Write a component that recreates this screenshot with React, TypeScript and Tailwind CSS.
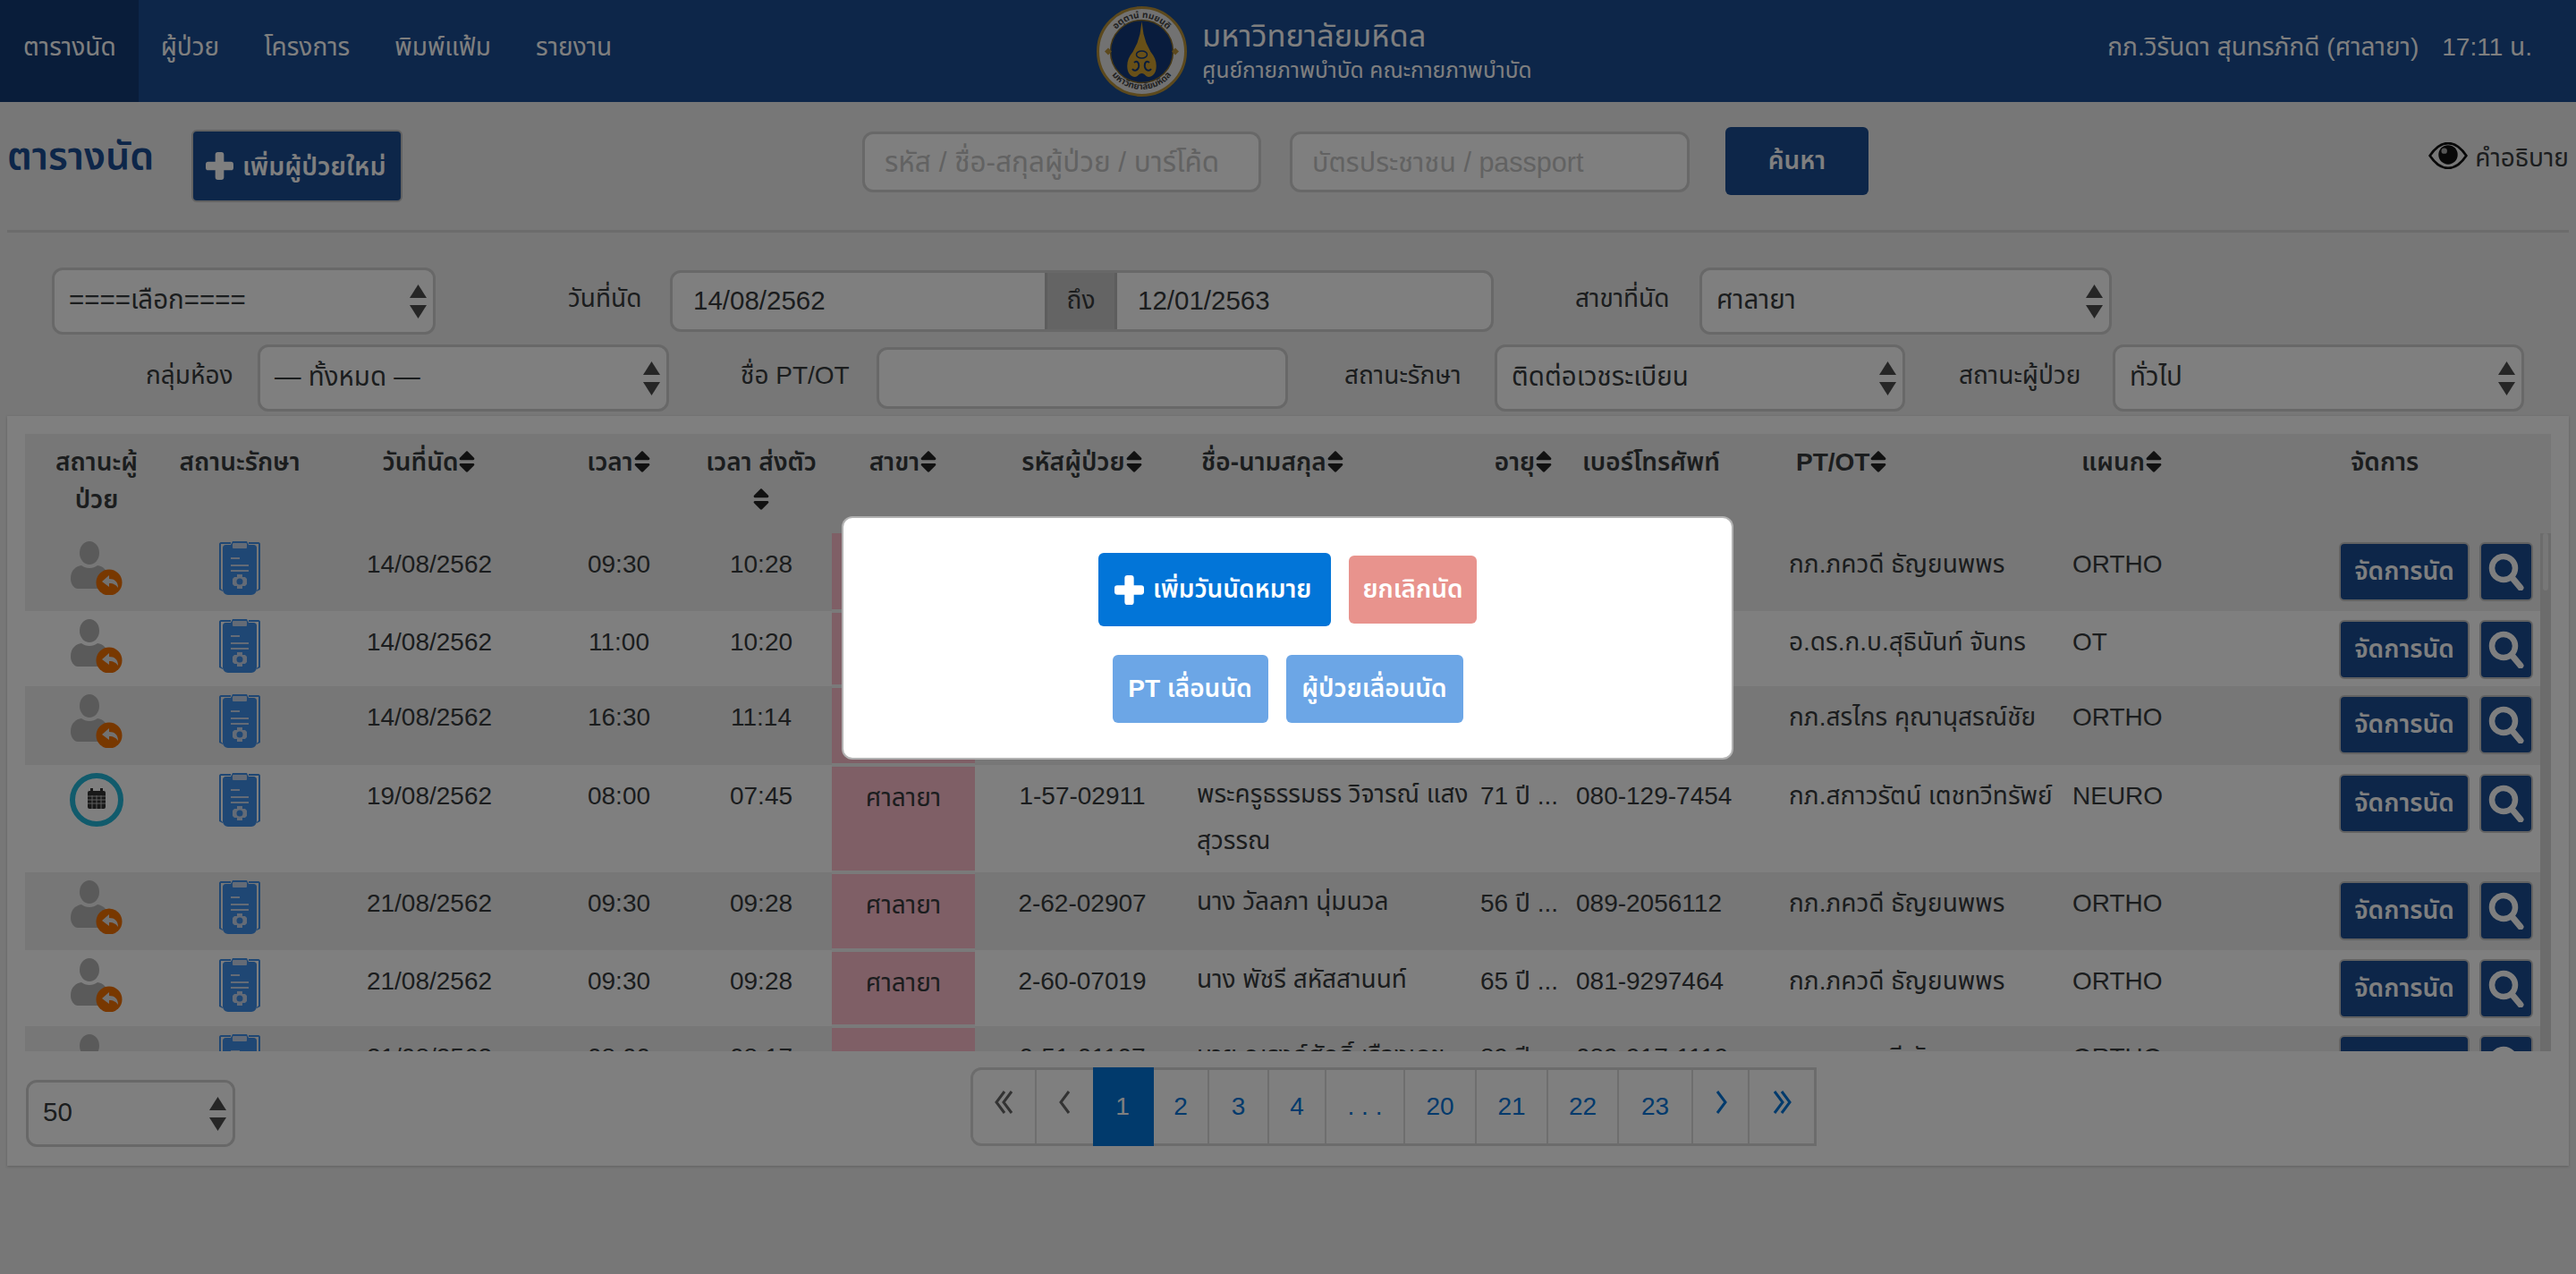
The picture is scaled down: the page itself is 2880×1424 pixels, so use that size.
import React from 'react';
import { FaSort } from 'react-icons/fa';

const NAVY_BTN = 'bg-[#1a4c92] border-2 border-[#c4c4c4] rounded-md text-white';

const navItems = ['ตารางนัด', 'ผู้ป่วย', 'โครงการ', 'พิมพ์แฟ้ม', 'รายงาน'];

const rows = [
  { h: 'h-[87px]', icon: 'person', date: '14/08/2562', time: '09:30', sent: '10:28', code: '', name: '', age: '', phone: '', pt: 'กภ.ภควดี ธัญยนพพร', dept: 'ORTHO' },
  { h: 'h-[84px]', icon: 'person', date: '14/08/2562', time: '11:00', sent: '10:20', code: '', name: '', age: '', phone: '', pt: 'อ.ดร.ก.บ.สุธินันท์ จันทร', dept: 'OT' },
  { h: 'h-[88px]', icon: 'person', date: '14/08/2562', time: '16:30', sent: '11:14', code: '', name: '', age: '', phone: '', pt: 'กภ.สรไกร คุณานุสรณ์ชัย', dept: 'ORTHO' },
  { h: 'h-[120px]', icon: 'calendar', date: '19/08/2562', time: '08:00', sent: '07:45', code: '1-57-02911', name: 'พระครูธรรมธร วิจารณ์ แสงสุวรรณ', age: '71 ปี ...', phone: '080-129-7454', pt: 'กภ.สกาวรัตน์ เตชทวีทรัพย์', dept: 'NEURO' },
  { h: 'h-[87px]', icon: 'person', date: '21/08/2562', time: '09:30', sent: '09:28', code: '2-62-02907', name: 'นาง วัลลภา นุ่มนวล', age: '56 ปี ...', phone: '089-2056112', pt: 'กภ.ภควดี ธัญยนพพร', dept: 'ORTHO' },
  { h: 'h-[85px]', icon: 'person', date: '21/08/2562', time: '09:30', sent: '09:28', code: '2-60-07019', name: 'นาง พัชรี สหัสสานนท์', age: '65 ปี ...', phone: '081-9297464', pt: 'กภ.ภควดี ธัญยนพพร', dept: 'ORTHO' },
  { h: 'h-[87px]', icon: 'person', date: '21/08/2562', time: '08:00', sent: '08:17', code: '0-51-01107', name: 'นาย ณรงค์ศักดิ์ เรืองเดช', age: '89 ปี ...', phone: '089-917-1119', pt: 'อ.ดร.ภควดี ธัญยนพพร', dept: 'ORTHO' },
];

const pages = [
  { label: '1', w: 'w-[68px]', active: true },
  { label: '2', w: 'w-[62px]' },
  { label: '3', w: 'w-[67px]' },
  { label: '4', w: 'w-[64px]' },
  { label: '. . .', w: 'w-[88px]' },
  { label: '20', w: 'w-[80px]' },
  { label: '21', w: 'w-[80px]' },
  { label: '22', w: 'w-[79px]' },
  { label: '23', w: 'w-[83px]' },
];

function SelectArrows() {
  return (
    <svg width="19" height="38" viewBox="0 0 19 38" className="shrink-0">
      <polygon points="9.5,0 19,15 0,15" fill="#4c4c4c" />
      <polygon points="0,23 19,23 9.5,38" fill="#4c4c4c" />
    </svg>
  );
}

function FakeSelect({ value, className }: { value: string; className: string }) {
  return (
    <div className={`h-[75px] bg-white border-[3px] border-[#d0d0d0] rounded-xl flex items-center justify-between pl-[16px] pr-[7px] text-[29.5px] ${className}`}>
      <span className="pb-[4px]">{value}</span>
      <SelectArrows />
    </div>
  );
}

function Plus({ size }: { size: number }) {
  return (
    <svg width={size} height={size} viewBox="0 0 32 32" className="shrink-0">
      <rect x="11" y="0" width="10" height="32" rx="3" fill="currentColor" />
      <rect x="0" y="11" width="32" height="10" rx="3" fill="currentColor" />
    </svg>
  );
}

function PersonIcon() {
  return (
    <svg width="58" height="60" viewBox="0 0 58 60">
      <ellipse cx="21" cy="13" rx="11" ry="13" fill="#b4b4b4" />
      <path d="M0 42c0-10 6-14 12-15 5 4 13 4 18 0 6 1 12 5 12 15 0 6-4 11-8 11H8c-4 0-8-5-8-11z" fill="#b4b4b4" />
      <circle cx="43" cy="46" r="14.5" fill="#f07000" />
      <path d="M35 45l8-7v4c6 0 10 3 10 10-2-3-5-5-10-5v4z" fill="#e4e4e4" />
    </svg>
  );
}

function CalendarIcon() {
  return (
    <svg width="60" height="60" viewBox="0 0 60 60">
      <circle cx="30" cy="30" r="27" fill="white" stroke="#22b6d8" strokeWidth="6" />
      <rect x="20" y="20" width="20" height="20" rx="2" fill="#333" />
      <rect x="23" y="17" width="3" height="5" fill="#333" />
      <rect x="34" y="17" width="3" height="5" fill="#333" />
      <path d="M20 26h20M20 30h20M20 34h20M25 25v15M30 25v15M35 25v15" stroke="#bbb" strokeWidth="1" />
    </svg>
  );
}

function ClipboardIcon() {
  return (
    <svg width="48" height="60" viewBox="0 0 48 60">
      {/* back sheet brackets */}
      <path d="M1 3c0-1 1-2 2-2h11v2H3v50l2 2v1l-4-2zM47 3c0-1-1-2-2-2H34v2h11v50l-2 2v1l4-2z" fill="#3f8fe8" />
      {/* board */}
      <path d="M5 7c0-2 2-3 3-3h6l2-4h16l2 4h6c1 0 3 1 3 3v47c0 3-3 6-6 6H11c-3 0-6-3-6-6z" fill="#3f8fe8" />
      <rect x="16" y="2" width="16" height="6" rx="1" fill="#c8d6ec" />
      <rect x="14" y="18" width="10" height="2" fill="#c8d6ec" />
      <rect x="14" y="26" width="20" height="2" fill="#c8d6ec" />
      <rect x="14" y="32" width="20" height="2" fill="#c8d6ec" />
      <path d="M21 37h6v3h3l2 2v6l-2 2h-3v3h-6v-3h-3l-2-2v-6l2-2h3z" fill="#c8d6ec" />
      <circle cx="24" cy="45" r="3.5" fill="#3f8fe8" />
    </svg>
  );
}

function SearchIcon() {
  return (
    <svg width="40" height="42" viewBox="0 0 40 42">
      <circle cx="17" cy="17" r="13" fill="none" stroke="currentColor" strokeWidth="6.5" />
      <path d="M26 27l10 12" stroke="currentColor" strokeWidth="7" strokeLinecap="round" />
    </svg>
  );
}

function Seal() {
  return (
    <svg width="101" height="101" viewBox="0 0 101 101" className="shrink-0">
      <defs>
        <path id="ring-top" d="M13 50.5a37.5 37.5 0 0 1 75 0" />
        <path id="ring-bottom" d="M8 50.5a42.5 42.5 0 0 0 85 0" />
      </defs>
      <circle cx="50.5" cy="50.5" r="49" fill="#e4e4e4" stroke="#b8923a" strokeWidth="3" />
      <circle cx="50.5" cy="50.5" r="35" fill="#12397a" stroke="#8a6f2c" strokeWidth="1.5" />
      <text fontSize="10" fill="#444" fontWeight="700">
        <textPath href="#ring-top" startOffset="50%" textAnchor="middle">อตฺตานํ ทมยนฺติ</textPath>
      </text>
      <text fontSize="10" fill="#444" fontWeight="700">
        <textPath href="#ring-bottom" startOffset="50%" textAnchor="middle">มหาวิทยาลัยมหิดล</textPath>
      </text>
      <polygon points="9,50.5 13,46.5 17,50.5 13,54.5" fill="#b8923a" />
      <polygon points="84,50.5 88,46.5 92,50.5 88,54.5" fill="#b8923a" />
      {/* spire and crown */}
      <path d="M50.5 17l2 14 3 10 5 10c5 6 7 12 6 19-1 7-7 11-11 8-2-2-3-3-5-3s-3 1-5 3c-4 3-10-1-11-8-1-7 1-13 6-19l5-10 3-10z" fill="#d0a030" />
      <path d="M42 63c3-3 6 0 5 5-1 4-5 5-7 2M59 63c-3-3-6 0-5 5 1 4 5 5 7 2" fill="none" stroke="#12397a" strokeWidth="2" />
      <ellipse cx="50.5" cy="54" rx="6" ry="4" fill="none" stroke="#12397a" strokeWidth="1.5" />
    </svg>
  );
}

function Chevrons({ double, dir, className }: { double?: boolean; dir: 'left' | 'right'; className: string }) {
  const flip = dir === 'right' ? 'scale(-1 1) translate(-24 0)' : undefined;
  return (
    <svg width="24" height="26" viewBox="0 0 24 26" className={className}>
      <g transform={flip} fill="none" stroke="currentColor" strokeWidth="3">
        <path d={double ? 'M12 1L3 13l9 12' : 'M16 1L7 13l9 12'} />
        {double && <path d="M20 1l-9 12 9 12" />}
      </g>
    </svg>
  );
}

function Sort() {
  return <FaSort className="inline-block w-[20px] h-[30px] align-[-5px] text-[#222]" />;
}

export default function App() {
  return (
    <div className="relative w-[2880px] h-[1424px] overflow-hidden bg-[#eeeeee] text-[28px] leading-[42px] text-[#373a3c] font-['Liberation_Sans','Noto_Sans_Thai','Loma','Garuda','DejaVu_Sans',sans-serif]">
      {/* Nav bar */}
      <header className="h-[114px] bg-[#1a4c92] flex text-white">
        <nav className="flex w-[1226px] shrink-0 pl-[1px]">
          {navItems.map((item, i) => (
            <a key={item} className={`px-[25px] pt-[32px] ${i === 0 ? 'bg-[#123a74] -ml-[1px] pl-[26px]' : ''}`}>{item}</a>
          ))}
        </nav>
        <div className="flex items-center h-[114px]">
          <Seal />
          <div className="ml-[17px] flex flex-col -mt-[3px]">
            <span className="text-[34.5px] leading-[46px]">มหาวิทยาลัยมหิดล</span>
            <span className="text-[24.5px] leading-[32px]">ศูนย์กายภาพบำบัด คณะกายภาพบำบัด</span>
          </div>
        </div>
        <div className="ml-auto pr-[49px] pt-[32px] flex gap-[26px]">
          <span>กภ.วิรันดา สุนทรภักดี (ศาลายา)</span>
          <span>17:11 น.</span>
        </div>
      </header>

      {/* Title and search */}
      <div className="h-[146px] mx-[8px] border-b-[3px] border-[#d8d8d8] flex">
        <h1 className="text-[43px] leading-[52px] font-semibold text-[#1a4c92] mt-[34px] w-[206px]">ตารางนัด</h1>
        <button className={`${NAVY_BTN} mt-[31px] w-[236px] h-[81px] flex items-center gap-[10px] pl-[14px] font-semibold text-[28.5px]`}>
          <Plus size={31} />
          <span className="whitespace-nowrap">เพิ่มผู้ป่วยใหม่</span>
        </button>
        <input className="ml-[514px] mt-[33px] w-[446px] h-[68px] bg-white border-[3px] border-[#d0d0d0] rounded-xl px-[22px] text-[31.5px] placeholder:text-[#c4c4c4]" placeholder="รหัส / ชื่อ-สกุลผู้ป่วย / บาร์โค้ด" />
        <input className="ml-[32px] mt-[33px] w-[447px] h-[68px] bg-white border-[3px] border-[#d0d0d0] rounded-xl px-[22px] text-[30.5px] placeholder:text-[#c4c4c4]" placeholder="บัตรประชาชน / passport" />
        <button className="ml-[40px] mt-[28px] w-[160px] h-[76px] bg-[#1a4c92] rounded-md text-white font-semibold">ค้นหา</button>
        <div className="ml-auto mt-[42px] flex items-start gap-[8px] text-[28px]">
          <svg width="44" height="30" viewBox="0 0 40 28" className="mt-[3px]">
            <path d="M1 14C7 5 13 1 20 1s13 4 19 13c-6 9-12 13-19 13S7 23 1 14z" fill="none" stroke="#111" strokeWidth="2.5" />
            <circle cx="20" cy="13" r="10" fill="#111" />
            <circle cx="16" cy="9" r="3" fill="#aaa" />
          </svg>
          <span>คำอธิบาย</span>
        </div>
      </div>

      {/* Filters */}
      <div className="pt-[39px] h-[205px] flex flex-col gap-[11px]">
        <div className="flex items-center">
          <FakeSelect value="====เลือก====" className="ml-[58px] w-[429px]" />
          <label className="ml-[148px] w-[83px] pb-[6px]">วันที่นัด</label>
          <div className="ml-[31px] w-[921px] h-[69px] flex bg-white border-[3px] border-[#d0d0d0] rounded-xl text-[29.5px]">
            <span className="w-[416px] pl-[23px] flex items-center pb-[2px]">14/08/2562</span>
            <span className="w-[81px] bg-[#c8c8c8] border-x-[3px] border-[#bbb] flex items-center justify-center pb-[2px] text-[28px]">ถึง</span>
            <span className="pl-[23px] flex items-center pb-[2px]">12/01/2563</span>
          </div>
          <label className="ml-[91px] w-[109px] pb-[6px] whitespace-nowrap">สาขาที่นัด</label>
          <FakeSelect value="ศาลายา" className="ml-[30px] w-[461px]" />
        </div>
        <div className="flex items-center">
          <label className="ml-[163px] w-[95px] whitespace-nowrap pb-[6px]">กลุ่มห้อง</label>
          <FakeSelect value="— ทั้งหมด —" className="ml-[30px] w-[460px]" />
          <label className="ml-[80px] w-[122px] whitespace-nowrap pb-[6px]">ชื่อ PT/OT</label>
          <div className="ml-[30px] w-[460px] h-[69px] bg-white border-[3px] border-[#d0d0d0] rounded-xl" />
          <label className="ml-[63px] w-[137px] whitespace-nowrap pb-[6px]">สถานะรักษา</label>
          <FakeSelect value="ติดต่อเวชระเบียน" className="ml-[31px] w-[459px]" />
          <label className="ml-[60px] w-[140px] whitespace-nowrap pb-[6px]">สถานะผู้ป่วย</label>
          <FakeSelect value="ทั่วไป" className="ml-[32px] w-[460px]" />
        </div>
      </div>

      {/* Table panel */}
      <div className="mx-[8px] h-[838px] bg-white shadow-[0_1px_3px_rgba(0,0,0,0.2)] pt-[20px]">
        <div className="mx-[20px]">
          <table className="table-fixed w-[2824px] font-semibold bg-[#eeeeee]">
            <colgroup>
              <col className="w-[160px]" /><col className="w-[160px]" /><col className="w-[264px]" /><col className="w-[160px]" /><col className="w-[158px]" /><col className="w-[160px]" /><col className="w-[240px]" /><col className="w-[317px]" /><col className="w-[107px]" /><col className="w-[238px]" /><col className="w-[317px]" /><col className="w-[300px]" /><col className="w-[243px]" />
            </colgroup>
            <thead>
              <tr className="h-[111px] align-top">
                <th className="font-semibold pt-[11px]">สถานะผู้<br />ป่วย</th>
                <th className="font-semibold pt-[11px] whitespace-nowrap">สถานะรักษา</th>
                <th className="font-semibold pt-[11px]">วันที่นัด<Sort /></th>
                <th className="font-semibold pt-[11px]">เวลา<Sort /></th>
                <th className="font-semibold pt-[11px]">เวลา ส่งตัว<br /><Sort /></th>
                <th className="font-semibold pt-[11px]">สาขา<Sort /></th>
                <th className="font-semibold pt-[11px] whitespace-nowrap">รหัสผู้ป่วย<Sort /></th>
                <th className="font-semibold pt-[11px] text-left pl-[13px]">ชื่อ-นามสกุล<Sort /></th>
                <th className="font-semibold pt-[11px] pl-[6px]">อายุ<Sort /></th>
                <th className="font-semibold pt-[11px] text-left pl-[15px]">เบอร์โทรศัพท์</th>
                <th className="font-semibold pt-[11px] text-left pl-[16px]">PT/OT<Sort /></th>
                <th className="font-semibold pt-[11px] text-left pl-[18px]">แผนก<Sort /></th>
                <th className="font-semibold pt-[11px] text-left pl-[19px]">จัดการ</th>
              </tr>
            </thead>
          </table>
          <div className="relative h-[579px] overflow-hidden">
            <table className="table-fixed w-[2812px]">
              <colgroup>
                <col className="w-[160px]" /><col className="w-[160px]" /><col className="w-[264px]" /><col className="w-[160px]" /><col className="w-[158px]" /><col className="w-[160px]" /><col className="w-[240px]" /><col className="w-[317px]" /><col className="w-[107px]" /><col className="w-[238px]" /><col className="w-[317px]" /><col className="w-[300px]" /><col className="w-[231px]" />
              </colgroup>
              <tbody>
                {rows.map((r, i) => (
                  <tr key={i} className={`${r.h} align-top ${i % 2 === 0 ? 'bg-[#eeeeee]' : 'bg-white'}`}>
                    <td className="pt-[9px]"><div className="flex justify-center">{r.icon === 'person' ? <PersonIcon /> : <CalendarIcon />}</div></td>
                    <td className="pt-[9px]"><div className="flex justify-center"><ClipboardIcon /></div></td>
                    <td className="pt-[14px] text-center">{r.date}</td>
                    <td className="pt-[14px] text-center">{r.time}</td>
                    <td className="pt-[14px] text-center">{r.sent}</td>
                    <td className="pt-[14px] text-center bg-[#ffbecd] border-b-[4px] border-[#f4f4f4]">ศาลายา</td>
                    <td className="pt-[14px] text-center">{r.code}</td>
                    <td className="pt-[7px] pl-[8px] leading-[52px]">{r.name}</td>
                    <td className="pt-[14px] pl-[8px] whitespace-nowrap">{r.age}</td>
                    <td className="pt-[14px] pl-[8px]">{r.phone}</td>
                    <td className="pt-[14px] pl-[8px] whitespace-nowrap">{r.pt}</td>
                    <td className="pt-[14px] pl-[8px]">{r.dept}</td>
                    <td className="pt-[10px] pl-[6px]">
                      <div className="flex gap-[11px]">
                        <button className={`${NAVY_BTN} w-[146px] h-[66px] font-semibold`}>จัดการนัด</button>
                        <button className={`${NAVY_BTN} w-[60px] h-[66px] flex items-center justify-center`}><SearchIcon /></button>
                      </div>
                    </td>
                  </tr>
                ))}
              </tbody>
            </table>
            {/* Scrollbar */}
            <div className="absolute top-0 right-[0px] w-[12px] h-full bg-[#d8d8d8]">
              <div className="mx-auto w-[6px] h-[64px] bg-[#eeeeee] rounded-full" />
            </div>
          </div>
        </div>

        {/* Footer: page size + pagination */}
        <div className="relative mt-[18px] flex pl-[21px]">
          <FakeSelect value="50" className="mt-[14px] w-[234px]" />
          <div className="ml-[822px] flex h-[88px] border-[3px] border-[#d8d8d8] rounded-l-xl bg-white">
            <span className="w-[71px] border-r-[2px] border-[#ddd] flex items-center justify-center text-[#666]">
              <Chevrons double dir="left" className="mb-[10px]" />
            </span>
            <span className="w-[63px] flex items-center justify-center text-[#666]">
              <Chevrons dir="left" className="mb-[10px]" />
            </span>
            {pages.map((p) => (
              <span key={p.label} className={`${p.w} flex items-center justify-center border-r-[2px] ${p.active ? 'bg-[#0275d8] text-white border-[#0275d8] -my-[3px]' : 'text-[#0275d8] border-[#ddd]'}`}>{p.label}</span>
            ))}
            <span className="w-[63px] border-r-[2px] border-[#ddd] flex items-center justify-center text-[#0275d8]">
              <Chevrons dir="right" className="mb-[10px]" />
            </span>
            <span className="w-[72px] flex items-center justify-center text-[#0275d8]">
              <Chevrons double dir="right" className="mb-[10px]" />
            </span>
          </div>
        </div>
      </div>

      {/* Modal backdrop */}
      <div className="absolute inset-0 bg-[rgba(0,0,0,0.5)]">
        <div className="absolute left-[941px] top-[577px] w-[997px] h-[272px] bg-white rounded-xl border-[2px] border-black/30 flex flex-col items-center pt-[39px] text-white font-semibold">
          <div className="flex items-center gap-[20px]">
            <button className="w-[260px] h-[82px] bg-[#0275d8] rounded-md flex items-center gap-[10px] pl-[18px]">
              <Plus size={33} />
              <span className="whitespace-nowrap">เพิ่มวันนัดหมาย</span>
            </button>
            <button className="w-[143px] h-[76px] bg-[#e8938d] rounded-md">ยกเลิกนัด</button>
          </div>
          <div className="flex gap-[20px] mt-[32px]">
            <button className="w-[174px] h-[76px] bg-[#6ca6e6] rounded-md">PT เลื่อนนัด</button>
            <button className="w-[198px] h-[76px] bg-[#6ca6e6] rounded-md">ผู้ป่วยเลื่อนนัด</button>
          </div>
        </div>
      </div>
    </div>
  );
}
